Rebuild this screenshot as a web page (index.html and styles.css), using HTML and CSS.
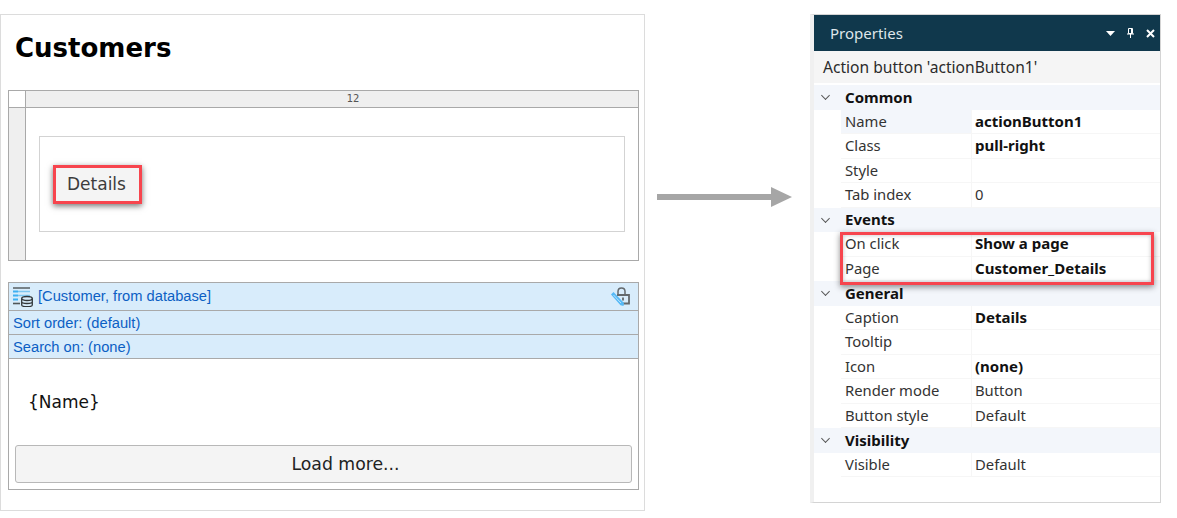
FILE: index.html
```html
<!DOCTYPE html>
<html lang="en">
<head>
    <meta charset="UTF-8">
    <title>Customers page properties</title>
    <link rel="stylesheet" href="styles.css">
</head>
<body>

<div class="page">
    <h1>Customers</h1>

    <div class="layout-grid">
        <div class="grid-head">
            <div class="grid-corner"></div>
            <div class="grid-ruler">12</div>
        </div>
        <div class="grid-body">
            <div class="grid-side"></div>
            <div class="grid-cell">
                <div class="column-box">
                    <div class="action-button">Details</div>
                </div>
            </div>
        </div>
    </div>

    <div class="list-widget">
        <div class="source-row source-title">
            <svg class="source-icon" width="20" height="20" viewBox="0 0 20 20">
                <path d="M0 1h17" stroke="#5f666a" stroke-width="1.6"/>
                <path d="M0 4.500h5M0 8.500h5M0 12.500h5" stroke="#3fb0f2" stroke-width="2.200"/>
                <path d="M5 4.500h12M5 8.500h12" stroke="#7cc6f0" stroke-width="1.600"/>
                <path d="M0 16.500h7" stroke="#4f5659" stroke-width="1.600"/>
                <ellipse cx="14" cy="11.500" rx="5.300" ry="2" fill="#d8ecfb" stroke="#33383b" stroke-width="1.300"/>
                <path d="M8.700 11.500v6.500c0 1 2.400 1.700 5.300 1.700s5.300-.7 5.300-1.700v-6.500M8.700 14.800c0 1 2.400 1.700 5.300 1.700s5.300-.7 5.300-1.700" fill="none" stroke="#33383b" stroke-width="1.300"/>
            </svg>
            <span class="source-name">[Customer, from database]</span>
            <svg class="lock-icon" width="21" height="20" viewBox="0 0 21 20">
                <path d="M8 7.500V4.500C8 2.500 9.500 1 11.500 1S15 2.500 15 4.500v3" fill="none" stroke="#63686c" stroke-width="1.500"/>
                <path d="M7 8h12v8.500h-6" fill="none" stroke="#63686c" stroke-width="1.800"/>
                <path d="M13 10.500v3" stroke="#63686c" stroke-width="1.800"/>
                <path d="M1 7.500l2.500-2.500 10.500 11-.5 3-3-.8z" fill="#55b9f6"/>
                <path d="M3.500 8l7.500 8" stroke="#d8ecfb" stroke-width=".8"/>
            </svg>
        </div>
        <div class="source-row">Sort order: (default)</div>
        <div class="source-row">Search on: (none)</div>
        <div class="list-item">{Name}</div>
        <div class="load-more">Load more...</div>
    </div>
</div>

<svg class="arrow" width="135" height="20" viewBox="0 0 135 20">
    <path d="M0 7h114V0l21 10-21 10v-7H0z" fill="#a6a6a6"/>
</svg>

<div class="properties">
    <div class="props-title">
        <span>Properties</span>
        <div class="title-icons">
            <svg width="9" height="5" viewBox="0 0 9 5"><path d="M0 0h9L4.500 5z" fill="#fff"/></svg>
            <svg width="7" height="10" viewBox="0 0 7 10"><path d="M1.500.5h4v5h-4zM0 6h7M3.500 6v4M4.500 1v4" fill="none" stroke="#fff"/></svg>
            <svg width="9" height="9" viewBox="0 0 9 9"><path d="M1 1l7 7M8 1l-7 7" stroke="#fff" stroke-width="2"/></svg>
        </div>
    </div>
    <div class="props-subject">Action button 'actionButton1'</div>

    <div class="props-table">
        <div class="group"><span class="chevron"></span><span class="group-name">Common</span></div>
        <div class="prop first"><div class="prop-name">Name</div><div class="prop-value set">actionButton1</div></div>
        <div class="prop"><div class="prop-name">Class</div><div class="prop-value set">pull-right</div></div>
        <div class="prop"><div class="prop-name">Style</div><div class="prop-value"></div></div>
        <div class="prop"><div class="prop-name">Tab index</div><div class="prop-value">0</div></div>

        <div class="group"><span class="chevron"></span><span class="group-name">Events</span></div>
        <div class="prop"><div class="prop-name">On click</div><div class="prop-value set">Show a page</div></div>
        <div class="prop"><div class="prop-name">Page</div><div class="prop-value set">Customer_Details</div></div>

        <div class="group"><span class="chevron"></span><span class="group-name">General</span></div>
        <div class="prop"><div class="prop-name">Caption</div><div class="prop-value set">Details</div></div>
        <div class="prop"><div class="prop-name">Tooltip</div><div class="prop-value"></div></div>
        <div class="prop"><div class="prop-name">Icon</div><div class="prop-value set">(none)</div></div>
        <div class="prop"><div class="prop-name">Render mode</div><div class="prop-value">Button</div></div>
        <div class="prop"><div class="prop-name">Button style</div><div class="prop-value">Default</div></div>

        <div class="group"><span class="chevron"></span><span class="group-name">Visibility</span></div>
        <div class="prop"><div class="prop-name">Visible</div><div class="prop-value">Default</div></div>
    </div>

    <div class="highlight"></div>
</div>

</body>
</html>
```

FILE: styles.css
```css
body {
    margin: 0;
    padding-top: 14px;
    display: flex;
    align-items: flex-start;
    background-color: #fff;
    overflow: hidden;
}

/* left: page editor */
.page {
    width: 645px;
    height: 497px;
    box-sizing: border-box;
    border: 1px solid #dcdcdc;
    padding: 0 5px 0 7px;
    font-family: "DejaVu Sans", sans-serif;
}
h1 {
    margin: 0;
    padding: 17px 0 0 7px;
    height: 58px;
    font-size: 26px;
    line-height: 33px;
    font-weight: bold;
    color: #000;
}
.layout-grid {
    width: 631px;
    box-sizing: border-box;
    height: 171px;
    border: 1px solid #a9a9a9;
    display: flex;
    flex-direction: column;
}
.grid-head {
    display: flex;
    height: 16px;
    border-bottom: 1px solid #a9a9a9;
}
.grid-corner {
    width: 16px;
    border-right: 1px solid #a9a9a9;
    background-color: #fff;
}
.grid-ruler {
    flex: 1;
    background-color: #efefef;
    padding-left: 42px;
    text-align: center;
    font-size: 10px;
    line-height: 16px;
    color: #555;
}
.grid-body {
    flex: 1;
    display: flex;
}
.grid-side {
    width: 16px;
    border-right: 1px solid #a9a9a9;
    background-color: #efefef;
}
.grid-cell {
    flex: 1;
    padding: 28px 13px 0 13px;
}
.column-box {
    height: 96px;
    box-sizing: border-box;
    border: 1px solid #d3d3d3;
    padding: 28px 13px;
}
.action-button {
    width: 89px;
    height: 39px;
    box-sizing: border-box;
    border: 3px solid #f7454e;
    background-color: #f4f4f4;
    box-shadow: 0 2px 6px rgba(0, 0, 0, 0.55);
    padding-left: 11px;
    font-size: 17px;
    line-height: 33px;
    color: #3c3c3c;
}

.list-widget {
    margin-top: 21px;
    width: 631px;
    height: 208px;
    box-sizing: border-box;
    border: 1px solid #a9a9a9;
}
.source-row {
    height: 24px;
    box-sizing: border-box;
    border-bottom: 1px solid #a9a9a9;
    background-color: #d8ecfb;
    padding-left: 4px;
    font-family: "Liberation Sans", Arial, sans-serif;
    font-size: 14.7px;
    line-height: 24px;
    color: #0c5fc4;
}
.source-title {
    height: 28px;
    display: flex;
    align-items: center;
    padding-right: 7px;
}
.source-icon {
    margin-right: 5px;
    flex: none;
}
.source-name {
    margin-top: -2px;
}
.lock-icon {
    margin-left: auto;
}
.list-item {
    height: 86px;
    box-sizing: border-box;
    padding: 31px 0 0 19px;
    font-size: 17px;
    line-height: 24px;
    color: #111;
}
.load-more {
    margin: 0 6px;
    height: 38px;
    box-sizing: border-box;
    border: 1px solid #b8b8b8;
    border-radius: 3px;
    background-color: #f4f4f4;
    padding-left: 44px;
    text-align: center;
    font-size: 17.3px;
    line-height: 36px;
    color: #222;
}

.arrow {
    margin: 173px 18px 0 12px;
    flex: none;
}

/* right: properties panel */
.properties {
    position: relative;
    width: 351px;
    height: 489px;
    box-sizing: border-box;
    border: 1px solid #d4d4d4;
    border-left: 4px solid #f0f0f0;
    font-family: "Noto Sans", sans-serif;
    font-size: 14.8px;
    color: #333;
    background-color: #fff;
}
.props-title {
    height: 36px;
    background-color: #10384c;
    color: #dfe6ea;
    display: flex;
    align-items: center;
    justify-content: space-between;
    padding: 0 5px 0 16px;
    font-size: 15px;
}
.title-icons {
    display: flex;
    align-items: center;
    gap: 12px;
}
.props-subject {
    height: 32px;
    background-color: #f5f5f5;
    padding-left: 9px;
    font-size: 15.6px;
    line-height: 33px;
    color: #2b2b2b;
}
.props-table {
    margin-top: 2px;
}
.group {
    height: 24.5px;
    background-color: #f3f6fb;
    display: flex;
    align-items: center;
    padding-left: 8px;
    font-size: 15px;
    font-weight: bold;
    color: #111;
}
.group-name {
    margin-top: -1px;
}
.chevron {
    width: 6px;
    height: 6px;
    margin: -3px 16px 0 0;
    border-right: 1.5px solid #555;
    border-bottom: 1.5px solid #555;
    transform: rotate(45deg) scale(0.9);
}
.prop {
    height: 24.5px;
    box-sizing: border-box;
    display: flex;
    margin-left: 27px;
    line-height: 23px;
    background-color: #fff;
    border-bottom: 1px solid #f6f6f6;
}
.prop-name {
    width: 131px;
    box-sizing: border-box;
    padding-left: 4px;
    border-right: 1px solid #f6f6f6;
}
.prop.first .prop-name {
    background-color: #f3f6fb;
}
.prop-value {
    flex: 1;
    padding-left: 3px;
}
.prop-value.set {
    font-size: 15px;
    font-weight: bold;
    color: #111;
}
.highlight {
    position: absolute;
    left: 26px;
    top: 217px;
    width: 314px;
    height: 53px;
    box-sizing: border-box;
    border: 3px solid #f7454e;
    box-shadow: 0 2px 6px rgba(0, 0, 0, 0.45), inset 0 0 4px rgba(0, 0, 0, 0.25);
}
```
